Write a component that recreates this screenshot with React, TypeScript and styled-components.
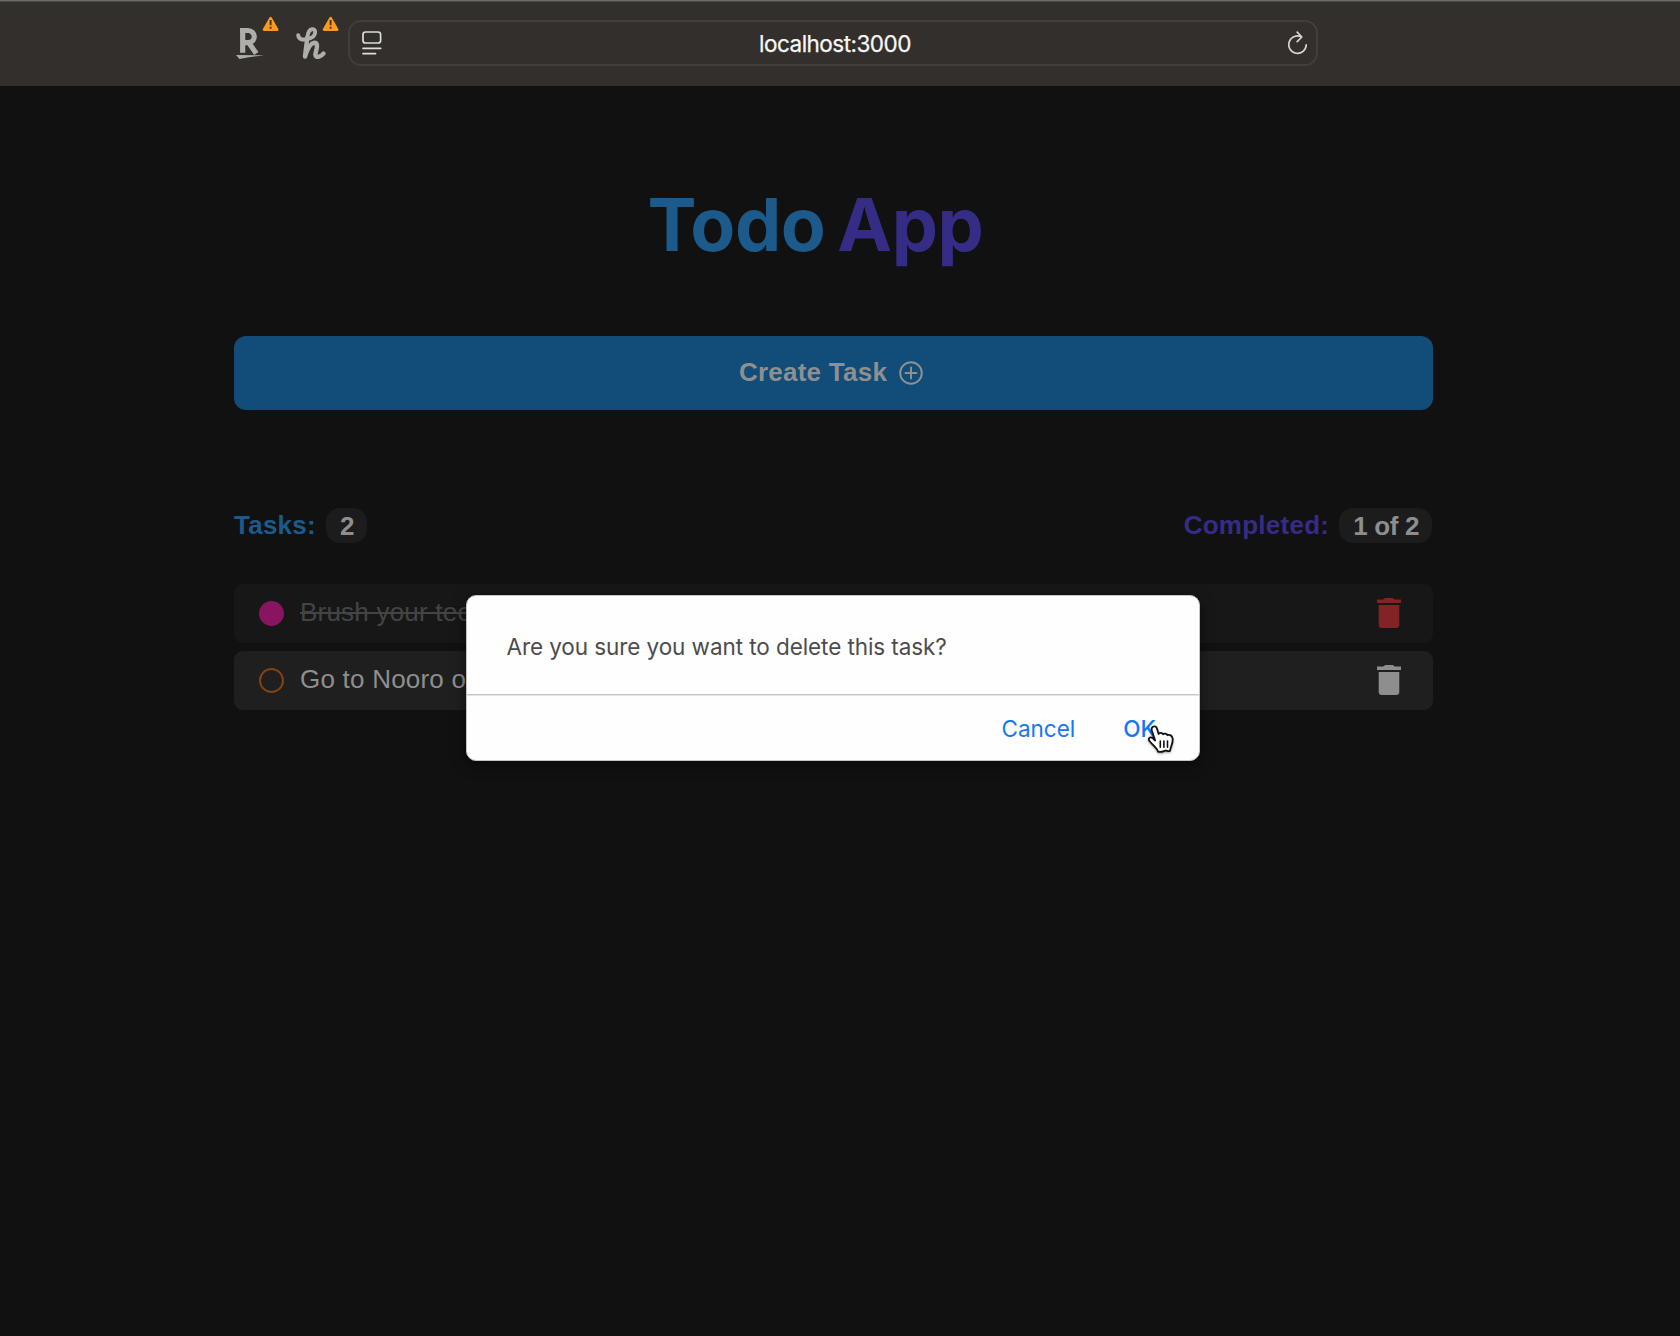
import React from "react";
import styled, { createGlobalStyle } from "styled-components";

const GlobalStyle = createGlobalStyle`
  *, *::before, *::after { box-sizing: border-box; }
  body { margin: 0; background: #111111; }
  button { font: inherit; border: 0; background: none; padding: 0; cursor: pointer; }
`;

const ui = `Inter, "Noto Sans", sans-serif`;
const sans = `"Liberation Sans", Arial, sans-serif`;

const Page = styled.div`
  position: relative;
  width: 1680px;
  height: 1336px;
  overflow: hidden;
  background: #111111;
  font-family: ${sans};
`;

const Toolbar = styled.header`
  display: flex;
  align-items: flex-start;
  height: 86px;
  padding: 19px 0 0 236px;
  background: #332f2d;
  border-top: 1px solid #6b6c6a;
  box-shadow: inset 0 1px #4b4a48;
`;

const Extensions = styled.div`
  display: flex;
  width: 112px;
  height: 46px;
  margin-top: -6px;
`;

const AddressBar = styled.div`
  display: flex;
  align-items: center;
  justify-content: space-between;
  width: 970px;
  height: 46px;
  padding: 0 8px 0 12px;
  border: 2px solid #403f3c;
  border-radius: 13px;
`;

const Address = styled.span`
  padding-top: 2px;
  font: 400 22.5px/30px ${ui};
  letter-spacing: -0.52px;
  color: #f7f7f6;
  -webkit-text-stroke: 0.25px #f7f7f6;
`;

const Main = styled.main`
  width: 1199px;
  margin-left: 234px;
  display: flex;
  flex-direction: column;
`;

const Title = styled.h1`
  display: flex;
  gap: 12px;
  margin: 93px 0 0 413.5px;
  font: 700 73.5px/92px ${ui};
  letter-spacing: -0.5px;
  color: #1b5a8a;
`;

const TitleAccent = styled.span`
  color: #352c86;
`;

const CreateButton = styled.button`
  && {
    display: flex;
    align-items: center;
    justify-content: center;
    gap: 12px;
    height: 74px;
    margin-top: 65px;
    padding: 0 5px 1px 0;
    border-radius: 12px;
    background: #114d78;
    color: #8d8f91;
    font: 700 26px/32px ${sans};
    letter-spacing: 0.25px;
  }
`;

const CreateText = styled.span`
  margin-top: -1px;
`;

const Summary = styled.div`
  display: flex;
  justify-content: space-between;
  margin-top: 98px;
  padding-right: 1px;
  height: 35px;
`;

const Stat = styled.div<{ $color: string }>`
  display: flex;
  align-items: center;
  gap: 10px;
  color: ${(p) => p.$color};
  font: 700 26px/35px ${sans};
  letter-spacing: 0.25px;
`;

const Count = styled.span`
  display: block;
  height: 35px;
  padding: 1px 13px 0 14px;
  border-radius: 14px;
  background: #1c1c1c;
  color: #8e8e8e;
  letter-spacing: -0.35px;
`;

const List = styled.ul`
  display: flex;
  flex-direction: column;
  gap: 8px;
  margin: 41px 0 0;
  padding: 0;
  list-style: none;
`;

const Row = styled.li<{ $done?: boolean }>`
  display: flex;
  align-items: center;
  height: 59px;
  padding: 0 32px 0 25px;
  border-radius: 9px;
  background: ${(p) => (p.$done ? "#171717" : "#1f1f1f")};
`;

const Check = styled.span<{ $done?: boolean }>`
  width: 25px;
  height: 25px;
  border-radius: 50%;
  border: 2px solid ${(p) => (p.$done ? "#8a145f" : "#834212")};
  background: ${(p) => (p.$done ? "#8a145f" : "transparent")};
`;

const Label = styled.span<{ $done?: boolean }>`
  flex: 1;
  margin-left: 16px;
  padding-bottom: 3px;
  font: 400 26px/32px ${sans};
  letter-spacing: 0.22px;
  color: ${(p) => (p.$done ? "#444444" : "#8e8e8e")};
  text-decoration: ${(p) => (p.$done ? "line-through" : "none")};
  text-decoration-thickness: 2px;
`;

const TrashButton = styled.button<{ $done?: boolean }>`
  && {
    display: flex;
    padding-bottom: 2px;
    color: ${(p) => (p.$done ? "#832424" : "#8e8e8e")};
  }
`;

const Dialog = styled.div`
  position: absolute;
  left: 466px;
  top: 595px;
  width: 734px;
  height: 166px;
  display: flex;
  flex-direction: column;
  border: 1px solid #c4c4c4;
  border-radius: 10px;
  background: #fefefe;
  box-shadow: 0 4px 14px rgba(0, 0, 0, 0.5);
  font-family: ${ui};
`;

const Message = styled.p`
  margin: 0;
  height: 99px;
  padding: 36px 0 0 39.5px;
  border-bottom: 1px solid #c6c6c6;
  box-shadow: 0 1px #e6e6e6;
  font-size: 22.5px;
  line-height: 30px;
  letter-spacing: -0.08px;
  color: #4c4c4c;
`;

const Actions = styled.div`
  display: flex;
  justify-content: flex-end;
  gap: 48px;
  padding: 19px 43px 0 0;
`;

const Action = styled.button<{ $primary?: boolean }>`
  && {
    color: #1677f2;
    font: ${(p) => (p.$primary ? 500 : 400)} 22.5px/30px ${ui};
  }
`;

const Pointer = styled.svg`
  position: absolute;
  left: 1144px;
  top: 722px;
  overflow: visible;
  filter: drop-shadow(0 1px 1px rgba(0, 0, 0, 0.35));
`;

const Warning = ({ x }: { x: number }) => (
  <g transform={`translate(${x} 0)`}>
    <path d="M7.6 4.200 14.200 15.600H1Z" fill="#fd9a20" stroke="#fd9a20" strokeWidth="2.600" strokeLinejoin="round" />
    <path d="M7.600 6v5.200M7.600 12.800v2" stroke="#4a3318" strokeWidth="1.900" />
  </g>
);

const ExtensionIcons = () => (
  <svg width="112" height="50" viewBox="0 0 112 50">
    <g fill="none" stroke="#b0aeab">
      <path d="M6.700 38.800V14M4 16.500H12a6.300 6.100 0 0 1 0 12.200H6.700M12.500 28.300 20.300 39.500" strokeWidth="5.200" />
    </g>
    <path d="M0 41 28 41.200Q14 43 3.500 45Z" fill="#b0aeab" />
    <g fill="none" stroke="#b0aeab" strokeLinecap="round" strokeLinejoin="round">
      <path
        d="M62.200 21.200C62.500 25.500 66.500 25.800 70 25.300 76 24.500 79.200 21.500 79.200 18 79.200 15.800 77.800 15 76 15.200 72.600 15.600 71.800 19.500 71.300 23.500"
        strokeWidth="3.900"
      />
      <path d="M71.300 23.500 69 42.500C72 33 75.500 29 78.500 28.800 81.500 28.800 81.300 32 80.500 35.500L79.500 39.500C78.900 42.500 80.800 43.300 83 42.600 85.500 41.800 86.500 40.800 87.500 39.500" strokeWidth="4.400" />
    </g>
    <Warning x={27} />
    <Warning x={87} />
  </svg>
);

const ReaderIcon = () => (
  <svg width="20" height="24" viewBox="0 0 20 24" fill="none" stroke="#deddda" strokeWidth="1.7" strokeLinecap="round">
    <rect x="1" y="1" width="17.6" height="11" rx="2.6" />
    <path d="M1 17.3h17.700M1 22.600h12.500" />
  </svg>
);

const ReloadIcon = () => (
  <svg width="20" height="24" viewBox="0 0 20 24" fill="none" stroke="#d5d4d1" strokeWidth="1.7" strokeLinecap="round" strokeLinejoin="round">
    <path d="M18.200 13.800A8.700 8.700 0 1 1 13.600 6M9.200 1.200 13.800 6 9.200 10.700" />
  </svg>
);

const PlusCircle = () => (
  <svg width="24" height="24" viewBox="0 0 24 24" fill="none" stroke="currentColor" strokeWidth="2" strokeLinecap="round">
    <circle cx="12" cy="12" r="10.800" />
    <path d="M12 6.500v11M6.500 12h11" />
  </svg>
);

const TrashIcon = () => (
  <svg width="24" height="30" viewBox="0 0 24 30" fill="currentColor">
    <path d="M0 1.600H6.300L8.300 0H15.700L17.700 1.600H24V4.900H0ZM1.700 7H22.300V26.800Q22.300 30 19.100 30H4.900Q1.700 30 1.700 26.800Z" />
  </svg>
);

const tasks = [
  { text: "Brush your teeth", done: true },
  { text: "Go to Nooro office", done: false },
];

export default function App() {
  return (
    <Page>
      <GlobalStyle />
      <Toolbar>
        <Extensions>
          <ExtensionIcons />
        </Extensions>
        <AddressBar>
          <ReaderIcon />
          <Address>localhost:3000</Address>
          <ReloadIcon />
        </AddressBar>
      </Toolbar>
      <Main>
        <Title>
          <span>Todo</span>
          <TitleAccent>App</TitleAccent>
        </Title>
        <CreateButton>
          <CreateText>Create Task</CreateText>
          <PlusCircle />
        </CreateButton>
        <Summary>
          <Stat $color="#1b5a8a">
            Tasks: <Count>2</Count>
          </Stat>
          <Stat $color="#352c86">
            Completed: <Count>1 of 2</Count>
          </Stat>
        </Summary>
        <List>
          {tasks.map((t) => (
            <Row key={t.text} $done={t.done}>
              <Check $done={t.done} />
              <Label $done={t.done}>{t.text}</Label>
              <TrashButton $done={t.done} aria-label="Delete task">
                <TrashIcon />
              </TrashButton>
            </Row>
          ))}
        </List>
      </Main>
      <Dialog role="dialog">
        <Message>Are you sure you want to delete this task?</Message>
        <Actions>
          <Action>Cancel</Action>
          <Action $primary>OK</Action>
        </Actions>
      </Dialog>
      <Pointer width="34" height="34" viewBox="0 0 34 34">
        <path
          d="M9 4.700C10.600 3.700 12.400 4.700 13 6.700L14.600 12C15.900 10.500 18 10.600 19 12.200 20.500 11 22.700 11.500 23.500 13.200 25.800 12.300 28 13.500 28.600 16.500 29.300 20.500 27 23.500 26 28.800 24.300 30 23 28.300 21.500 28.500 19.500 29 18.500 30.500 14 29.700 13.500 26.500 9.500 24 5.500 19 3.700 16.200 6 14.300 8.700 16.100L11.200 18.500 7.900 8.700C7.300 6.700 7.600 5.500 9 4.700Z"
          fill="#fff"
          stroke="#111"
          strokeWidth="1.800"
          strokeLinejoin="round"
        />
        <path d="M16.300 19v6.300M19.900 19v6.300M23.500 19v6.300" stroke="#111" strokeWidth="1.600" strokeLinecap="round" />
      </Pointer>
    </Page>
  );
}
